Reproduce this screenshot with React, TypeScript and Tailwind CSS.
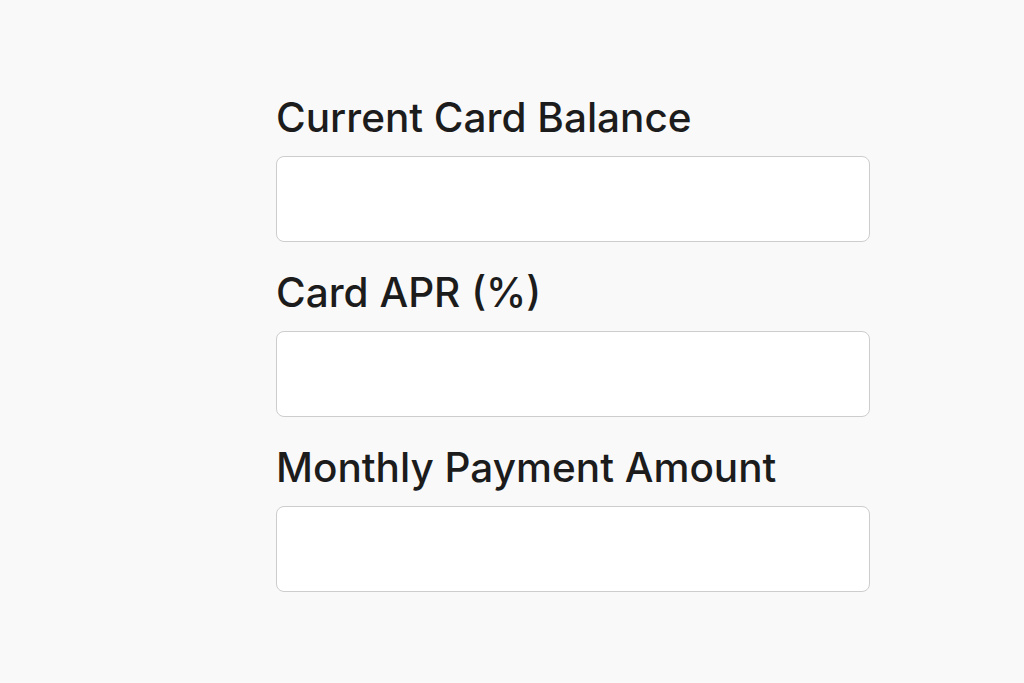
export default function App() {
    const fields = ['Current Card Balance', 'Card APR (%)', 'Monthly Payment Amount'];

    return (
        <div className="w-full min-h-[683px] bg-[#f9f9f9] font-['Inter','Noto_Sans',sans-serif]">
            <div className="pl-[276px] pt-[94px] w-[870px] flex flex-col gap-[27px]">
                {fields.map((label) => (
                    <div key={label} className="flex flex-col gap-[14px]">
                        <label className="text-[40.5px] leading-[48px] font-medium text-[#1c1c1c]">
                            {label}
                        </label>
                        <input
                            type="text"
                            className="h-[86px] w-full rounded-[8px] border border-[#cdcdcd] bg-white outline-none"
                        />
                    </div>
                ))}
            </div>
        </div>
    );
}
